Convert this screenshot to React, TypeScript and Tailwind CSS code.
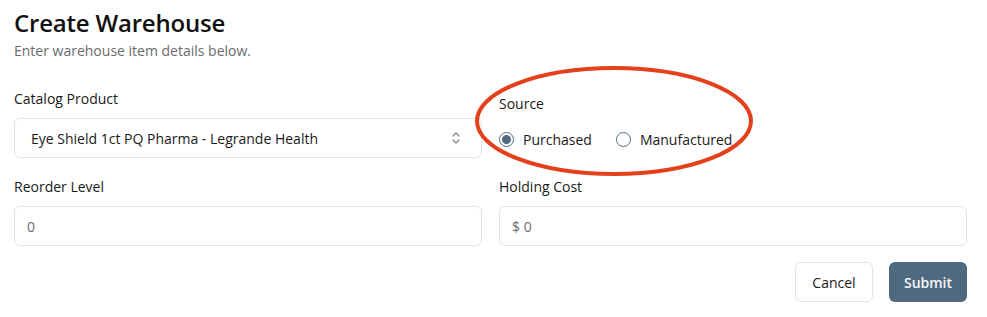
const App = () => {
  return (
    <div
      className="relative w-[987px] h-[317px] bg-white text-[#111] overflow-hidden"
      style={{ fontFamily: '"Open Sans", sans-serif' }}
    >
      <div className="pl-[14px] pr-[20px] pt-[7px]">
        {/* Header */}
        <h1 className="text-[24px] leading-[32px] font-semibold tracking-[-0.2px]">Create Warehouse</h1>
        <p className="text-[14px] leading-[20px] text-[#6b6b6b] mt-[2px]">Enter warehouse item details below.</p>

        {/* Row 1 */}
        <div className="grid grid-cols-2 gap-x-[17px] mt-[28px]">
          <div>
            <label className="block text-[14px] leading-[20px] text-[#1a1a1a]">Catalog Product</label>
            <div className="mt-[9px] h-[40px] flex items-center justify-between border border-[#e2e2e2] rounded-[6px] pl-[16px] pr-[20px]">
              <span className="text-[14px] text-[#1a1a1a]">Eye Shield 1ct PQ Pharma - Legrande Health</span>
              <svg width="10" height="14" viewBox="0 0 10 14" fill="none" stroke="#8a8a8a" strokeWidth="1.3" strokeLinecap="round" strokeLinejoin="round">
                <path d="M2 5l3-3 3 3" />
                <path d="M2 9l3 3 3-3" />
              </svg>
            </div>
          </div>
          <div className="pt-[5px]">
            <label className="block text-[14px] leading-[20px] text-[#1a1a1a]">Source</label>
            <div className="mt-[15px] flex items-center">
              <div className="flex items-center">
                <span className="w-[15px] h-[15px] rounded-full border border-[#4f6a80] flex items-center justify-center">
                  <span className="w-[9px] h-[9px] rounded-full bg-[#4f6a80]" />
                </span>
                <span className="ml-[9px] text-[14px] text-[#1a1a1a]">Purchased</span>
              </div>
              <div className="flex items-center ml-[24px]">
                <span className="w-[15px] h-[15px] rounded-full border border-[#4f6a80]" />
                <span className="ml-[9px] text-[14px] text-[#1a1a1a]">Manufactured</span>
              </div>
            </div>
          </div>
        </div>

        {/* Row 2 */}
        <div className="grid grid-cols-2 gap-x-[17px] mt-[19px]">
          <div>
            <label className="block text-[14px] leading-[20px] text-[#1a1a1a]">Reorder Level</label>
            <div className="mt-[9px] h-[40px] flex items-center border border-[#e2e2e2] rounded-[6px] px-[12px]">
              <span className="text-[14px] text-[#6b6b6b]">0</span>
            </div>
          </div>
          <div>
            <label className="block text-[14px] leading-[20px] text-[#1a1a1a]">Holding Cost</label>
            <div className="mt-[9px] h-[40px] flex items-center border border-[#e2e2e2] rounded-[6px] px-[12px]">
              <span className="text-[14px] text-[#6b6b6b]">$ 0</span>
            </div>
          </div>
        </div>

        {/* Actions */}
        <div className="flex justify-end gap-[16px] mt-[16px]">
          <button className="w-[78px] h-[40px] border border-[#e2e2e2] rounded-[6px] bg-white text-[14px] text-[#1a1a1a]">
            Cancel
          </button>
          <button className="w-[78px] h-[40px] rounded-[6px] bg-[#4f6a80] text-[14px] font-semibold text-[#f4f6f8]">
            Submit
          </button>
        </div>
      </div>

      {/* Annotation ellipse */}
      <svg className="absolute left-0 top-0 pointer-events-none" width="987" height="317">
        <ellipse cx="614" cy="121" rx="137" ry="53" fill="none" stroke="#e5401c" strokeWidth="4" />
      </svg>
    </div>
  );
};

export default App;
